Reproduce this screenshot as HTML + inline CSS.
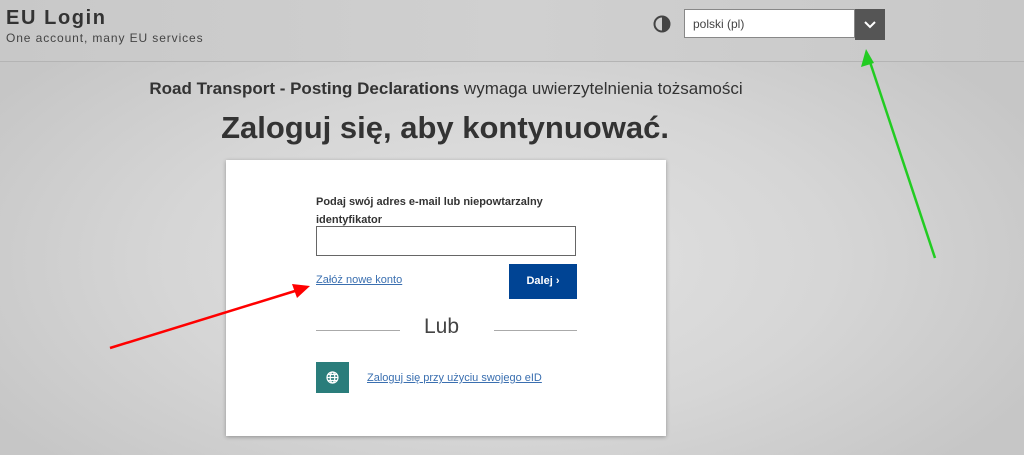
<!DOCTYPE html>
<html><head><meta charset="utf-8"><style>
body{margin:0;width:1024px;height:455px;overflow:hidden;font-family:"Liberation Sans",sans-serif;background:radial-gradient(ellipse 600px 300px at 500px 260px,#e2e2e2 0%,#d6d6d6 55%,#c6c6c6 100%);position:relative}
.hdr{position:absolute;left:0;top:0;width:1024px;height:61px;border-bottom:1px solid #b4b4b4;background:linear-gradient(90deg,#c8c8c8,#d0d0d0 50%,#c8c8c8)}
.t1{position:absolute;left:6px;top:7px;font-size:20px;font-weight:bold;color:#333;letter-spacing:1.6px}
.t2{position:absolute;left:6px;top:31px;font-size:12px;color:#444;letter-spacing:0.9px}
.sel{position:absolute;left:684px;top:9px;width:171px;height:29px;background:#fff;border:1px solid #888;font-size:12px;color:#444;line-height:29px;padding-left:8px;box-sizing:border-box}
.dd{position:absolute;left:855px;top:9px;width:30px;height:31px;background:#555;box-sizing:border-box}
.sub{position:absolute;left:0;width:892px;text-align:center;top:79px;font-size:17px;color:#333}
.h1{position:absolute;left:0;width:890px;text-align:center;top:110px;font-size:31px;font-weight:bold;color:#333}
.card{position:absolute;left:226px;top:160px;width:440px;height:276px;background:#fff;box-shadow:0 1px 4px rgba(0,0,0,.3)}
.lbl{position:absolute;left:90px;top:33px;width:260px;font-size:11px;font-weight:bold;color:#333;line-height:18px}
.inp{position:absolute;left:90px;top:66px;width:260px;height:30px;border:1px solid #666;box-sizing:border-box}
.lnk{position:absolute;left:90px;top:114px;font-size:11px;color:#3a6fb0;text-decoration:underline}
.btn{position:absolute;left:283px;top:104px;width:68px;height:35px;background:#004494;color:#fff;font-size:11px;font-weight:bold;text-align:center;line-height:35px}
.ln{position:absolute;top:170px;height:1px;background:#aaa}
.lub{position:absolute;left:198px;top:155px;font-size:21px;color:#444}
.gl{position:absolute;left:90px;top:202px;width:33px;height:31px;background:#2a7d7b}
.elnk{position:absolute;left:141px;top:212px;font-size:11px;color:#3a6fb0;text-decoration:underline}
</style></head><body>
<div class="hdr"></div>
<div class="t1">EU Login</div>
<div class="t2">One account, many EU services</div>
<svg style="position:absolute;left:653px;top:15px" width="18" height="18" viewBox="0 0 18 18"><circle cx="9" cy="9" r="7.5" fill="none" stroke="#444" stroke-width="2"/><path d="M9 1.5A7.5 7.5 0 0 1 9 16.5Z" fill="#444"/></svg>
<div class="sel">polski (pl)</div>
<div class="dd"><svg width="30" height="31"><path d="M10 13l5 5 5-5" stroke="#fff" stroke-width="2" fill="none"/></svg></div>
<div class="sub"><b>Road Transport - Posting Declarations</b> wymaga uwierzytelnienia tożsamości</div>
<div class="h1">Zaloguj się, aby kontynuować.</div>
<div class="card">
<div class="lbl">Podaj swój adres e-mail lub niepowtarzalny identyfikator</div>
<div class="inp"></div>
<div class="lnk">Załóż nowe konto</div>
<div class="btn">Dalej ›</div>
<div class="ln" style="left:90px;width:84px"></div>
<div class="ln" style="left:268px;width:83px"></div>
<div class="lub">Lub</div>
<div class="gl"><svg width="33" height="31" viewBox="0 0 33 31"><g fill="none" stroke="#fff" stroke-width="1.2"><circle cx="16.5" cy="15.5" r="5.5"/><ellipse cx="16.5" cy="15.5" rx="2.3" ry="5.5"/><path d="M11 15.5h11M12 12.5h9M12 18.5h9"/></g></svg></div>
<div class="elnk">Zaloguj się przy użyciu swojego eID</div>
</div>
<svg style="position:absolute;left:0;top:0" width="1024" height="455">
<line x1="110" y1="348" x2="295" y2="291" stroke="#f00" stroke-width="2.5"/>
<path d="M310 286l-18 -2 5 14z" fill="#f00"/>
<line x1="935" y1="258" x2="870" y2="62" stroke="#2c2" stroke-width="2.5"/>
<path d="M866 49l-5 18 13-4z" fill="#2c2"/>
</svg>
</body></html>
